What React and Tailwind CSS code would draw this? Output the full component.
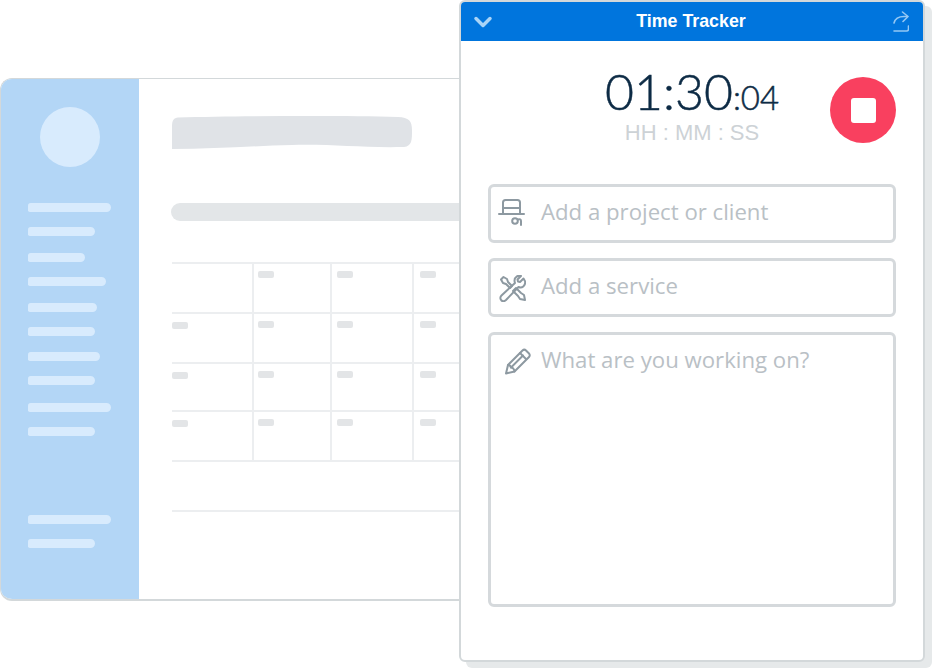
import React from 'react';

const sidebarBars = [
  { w: 'w-[83px]', mt: 'mt-[36px]' },
  { w: 'w-[67px]', mt: 'mt-[15px]' },
  { w: 'w-[57px]', mt: 'mt-[17px]' },
  { w: 'w-[78px]', mt: 'mt-[15px]' },
  { w: 'w-[69px]', mt: 'mt-[17px]' },
  { w: 'w-[67px]', mt: 'mt-[15px]' },
  { w: 'w-[72px]', mt: 'mt-[16px]' },
  { w: 'w-[67px]', mt: 'mt-[15px]' },
  { w: 'w-[83px]', mt: 'mt-[18px]' },
  { w: 'w-[67px]', mt: 'mt-[15px]' },
  { w: 'w-[83px]', mt: 'mt-[79px]' },
  { w: 'w-[67px]', mt: 'mt-[15px]' },
];

const tableRows = [
  { h: 'h-[50px]', first: false },
  { h: 'h-[50px]', first: true },
  { h: 'h-[48px]', first: true },
  { h: 'h-[50px]', first: true },
];

const Chip = ({ className = '' }) => (
  <div className={`h-[7px] w-[16px] rounded-[2px] bg-[#e3e5e7] ${className}`} />
);

const Sidebar = () => (
  <div className="flex w-[138px] shrink-0 flex-col bg-[#b3d6f6] pl-[27px]">
    <div className="mt-[28px] ml-[12px] h-[60px] w-[60px] rounded-full bg-[#d8ebfd]" />
    {sidebarBars.map((bar, i) => (
      <div key={i} className={`h-[9px] rounded-[3px_5px_5px_2px] bg-[#d8ebfd] ${bar.w} ${bar.mt}`} />
    ))}
  </div>
);

const Table = () => (
  <div className="mt-[41px] border-t-2 border-[#eceef0]">
    {tableRows.map((row, i) => (
      <div key={i} className={`grid grid-cols-[80px_78px_82px_1fr] border-b-2 border-[#eceef0] ${row.h}`}>
        <div className="pt-[8px]">{row.first && <Chip />}</div>
        <div className="border-l-2 border-[#eceef0] pt-[7px] pl-[4px]"><Chip /></div>
        <div className="border-l-2 border-[#eceef0] pt-[7px] pl-[5px]"><Chip /></div>
        <div className="border-l-2 border-[#eceef0] pt-[7px] pl-[6px]"><Chip /></div>
      </div>
    ))}
    <div className="h-[50px] border-b-2 border-[#eceef0]" />
  </div>
);

const BackgroundWindow = () => (
  <div className="absolute top-[78px] left-0 flex h-[523px] w-[480px] overflow-hidden rounded-[12px] border-t border-b-2 border-l border-[#d3d8da] bg-white">
    <Sidebar />
    <div className="flex-1 pt-[37px] pl-[33px]">
      <svg width="241" height="34" viewBox="0 0 241 34" className="block">
        <path d="M6 1.5 C70 0 170 -0.5 226 1 C237 1.5 240 5 240 14 C240 24 240 30 232 31 C190 32 160 28 120 29 C80 30 40 33 0 33 L0 10 C0 4 2 2 6 1.5 Z" fill="#e0e3e7" />
      </svg>
      <div className="mt-[53px] -ml-[1px] h-[18px] rounded-l-full bg-[#e3e6e8]" />
      <Table />
    </div>
  </div>
);

const HatIcon = () => (
  <svg width="27" height="28" viewBox="0 0 27 28" fill="none" stroke="#8d99a1" strokeWidth="2" strokeLinecap="round" className="block">
    <path d="M5 15V4.5C5 3 6 2 7.5 2h12C21 2 22 3 22 4.5V15" />
    <path d="M5 10h17" />
    <path d="M1 16h25" />
    <circle cx="17" cy="23" r="2.8" />
    <path d="M20 21.500c2-.6 3 0 3 1.500v4" />
  </svg>
);

const ToolsIcon = () => (
  <svg width="27" height="27" viewBox="0 0 27 27" fill="none" stroke="#8d99a1" strokeWidth="2" strokeLinejoin="round" strokeLinecap="round" className="block">
    <path d="M2 4.500 4.500 2 8 4l1 3 4 4-2 2-4-4-3-1Z" />
    <path d="M14 16l3-3 5 5 3 2 1 5-5-1-2-3Z" />
    <path d="M24.500 3.500 21 7l-2-.5-.5-2L22 1c-3-1-6.500 1-6.500 4.500 0 1 .2 1.700.5 2.500L2.500 20.500C1 22 1 24 2.300 25.200 3.500 26.500 5.500 26.300 7 25l12.500-13c3.500 1.500 7-1 6.700-5.500Z" />
  </svg>
);

const PencilIcon = () => (
  <svg width="27" height="27" viewBox="0 0 27 27" fill="none" stroke="#8d99a1" strokeWidth="2" strokeLinejoin="round" strokeLinecap="round" className="block">
    <path d="M2 25.500 4 17 18.500 2.500c1-1 2.500-1 3.500 0l3 3c1 1 1 2.500 0 3.500L10.500 23.500Z" />
    <path d="M16 5l6 6" />
    <path d="M4 17c2 0 2.500.5 3 2.500 2 0 3 1 3.500 4" />
    <path d="M7 19.500 19 7.500" />
  </svg>
);

const Field = ({ icon, label, className = '' }) => (
  <div className={`flex items-start gap-[16px] rounded-[6px] border-[3px] border-[#d5d9dc] pt-[10px] pl-[7px] ${className}`}>
    <div className="w-[27px] shrink-0 pt-[1px]">{icon}</div>
    <span className="text-[22.200px] leading-[30px] text-[#b9c0c5]">{label}</span>
  </div>
);

const TimeTracker = () => (
  <div className="absolute top-0 left-[459px] flex h-[662px] w-[466px] flex-col rounded-[6px] border-2 border-[#d3d8da] bg-white font-['Open_Sans',sans-serif] shadow-[7px_6px_0_#e6e9ea]">
    <div className="flex h-[39px] items-center justify-between rounded-t-[4px] bg-[#0075dd] pr-[14px] pl-[12px]">
      <svg width="20" height="14" viewBox="0 0 20 14" fill="none" stroke="#a9d4f7" strokeWidth="3.500" strokeLinecap="round" strokeLinejoin="round">
        <path d="M3 3.500 10 10.500 17 3.500" />
      </svg>
      <span className="mr-[4px] font-['Liberation_Sans',sans-serif] text-[17.800px] font-bold text-white">Time Tracker</span>
      <svg width="16" height="21" viewBox="0 0 16 21" fill="none" stroke="#94c8f4" strokeWidth="1.600" strokeLinecap="round" strokeLinejoin="round">
        <path d="M9.500 1 15 5.500 10 10.500" />
        <path d="M14.500 5.500H11C5.500 5.500 2 8 1 12" />
        <path d="M1 20h12.500c1.500 0 2-1 2-2v-3" />
      </svg>
    </div>
    <div className="grid h-[103px] grid-cols-[1fr_auto_1fr] px-[27px] pt-[22px]">
      <div />
      <div className="flex flex-col items-center">
        <div className="flex h-[56px] items-baseline font-['Lato',sans-serif] leading-[56px] font-light text-[#0d2b45] [-webkit-text-stroke:0.5px_#0d2b45]">
          <span className="text-[50px] leading-[56px]">01:30</span>
          <span className="text-[33px] leading-[56px]">:04</span>
        </div>
        <div className="mt-[1px] font-['Liberation_Sans',sans-serif] text-[22px] leading-[26px] text-[#cdd2d6]">HH : MM : SS</div>
      </div>
      <div className="flex justify-end pt-[14px]">
        <div className="flex h-[66px] w-[66px] items-center justify-center rounded-full bg-[#f9405f]">
          <div className="h-[25px] w-[25px] rounded-[3px] bg-white" />
        </div>
      </div>
    </div>
    <div className="mt-[40px] flex flex-col gap-[15px] px-[27px]">
      <Field icon={<HatIcon />} label="Add a project or client" className="h-[59px]" />
      <Field icon={<div className="pt-[3px] pl-[1px]"><ToolsIcon /></div>} label="Add a service" className="h-[59px]" />
      <Field icon={<div className="-mr-[6px] ml-[6px] pt-[2px]"><PencilIcon /></div>} label="What are you working on?" className="h-[275px]" />
    </div>
  </div>
);

export default function App() {
  return (
    <div className="relative h-[668px] w-[932px] overflow-hidden bg-white">
      <BackgroundWindow />
      <TimeTracker />
    </div>
  );
}
